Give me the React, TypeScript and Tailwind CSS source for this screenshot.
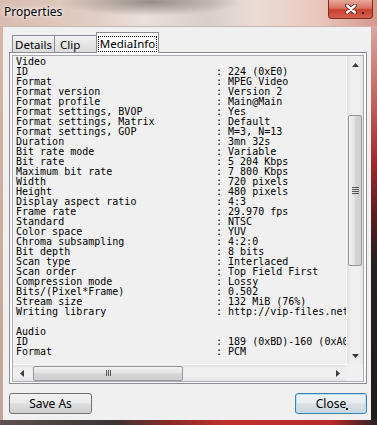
import React from "react";

const ROWS: [string, string | null][] = [
  ["Video", null],
  ["ID", "224 (0xE0)"],
  ["Format", "MPEG Video"],
  ["Format version", "Version 2"],
  ["Format profile", "Main@Main"],
  ["Format settings, BVOP", "Yes"],
  ["Format settings, Matrix", "Default"],
  ["Format settings, GOP", "M=3, N=13"],
  ["Duration", "3mn 32s"],
  ["Bit rate mode", "Variable"],
  ["Bit rate", "5 204 Kbps"],
  ["Maximum bit rate", "7 800 Kbps"],
  ["Width", "720 pixels"],
  ["Height", "480 pixels"],
  ["Display aspect ratio", "4:3"],
  ["Frame rate", "29.970 fps"],
  ["Standard", "NTSC"],
  ["Color space", "YUV"],
  ["Chroma subsampling", "4:2:0"],
  ["Bit depth", "8 bits"],
  ["Scan type", "Interlaced"],
  ["Scan order", "Top Field First"],
  ["Compression mode", "Lossy"],
  ["Bits/(Pixel*Frame)", "0.502"],
  ["Stream size", "132 MiB (76%)"],
  ["Writing library", "http://vip-files.net/"],
  ["", null],
  ["Audio", null],
  ["ID", "189 (0xBD)-160 (0xA0)"],
  ["Format", "PCM"],
];

function Arrow({ dir }: { dir: "up" | "down" | "left" | "right" }) {
  const pts = {
    up: "0,4 3.5,0 7,4",
    down: "0,0 7,0 3.5,4",
    left: "4,0 4,7 0,3.5",
    right: "0,0 4,3.5 0,7",
  }[dir];
  const vertical = dir === "up" || dir === "down";
  return (
    <svg width={vertical ? 7 : 4} height={vertical ? 4 : 7} viewBox={vertical ? "0 0 7 4" : "0 0 4 7"}>
      <polygon points={pts} fill="#3a3a3a" />
    </svg>
  );
}

function VScroll() {
  return (
    <div className="flex flex-col bg-[linear-gradient(90deg,#e2e2e2,#efefef_25%,#efefef_75%,#e4e4e4)] border-l border-[#f7f7f7]">
      <div className="h-[17px] flex items-center justify-center">
        <Arrow dir="up" />
      </div>
      <div className="flex-1">
        <div className="mt-[42px] mx-[1px] h-[151px] rounded-[2px] border border-[#979797] bg-[linear-gradient(90deg,#f4f4f4,#e2e2e2_45%,#d4d4d4_55%,#cfcfcf)] flex flex-col items-center justify-center gap-[1px]">
          <div className="w-[7px] h-px bg-[#555]" />
          <div className="w-[7px] h-px bg-[#555]" />
          <div className="w-[7px] h-px bg-[#555]" />
          <div className="w-[7px] h-px bg-[#555]" />
        </div>
      </div>
      <div className="h-[17px] flex items-center justify-center">
        <Arrow dir="down" />
      </div>
    </div>
  );
}

function HScroll() {
  return (
    <div className="flex bg-[linear-gradient(180deg,#e2e2e2,#efefef_25%,#efefef_75%,#e4e4e4)] border-t border-[#f7f7f7]">
      <div className="w-[17px] flex items-center justify-center">
        <Arrow dir="left" />
      </div>
      <div className="flex-1 flex items-center">
        <div className="ml-[3px] w-[150px] h-[15px] rounded-[2px] border border-[#979797] bg-[linear-gradient(180deg,#f4f4f4,#e2e2e2_45%,#d4d4d4_55%,#cfcfcf)] flex items-center justify-center gap-[1px]">
          <div className="w-px h-[6px] bg-[#555]" />
          <div className="w-px h-[6px] bg-[#555]" />
          <div className="w-px h-[6px] bg-[#555]" />
        </div>
      </div>
      <div className="w-[17px] flex items-center justify-center">
        <Arrow dir="right" />
      </div>
    </div>
  );
}

function InfoBox() {
  return (
    <div className="w-[352px] h-[327px] border border-[#abadb3] bg-[#f0f0f0] grid grid-cols-[333px_17px] grid-rows-[308px_17px]">
      <div className="overflow-hidden pl-[3px] pt-[1px] font-['DejaVu_Sans_Mono',monospace] text-[10px] leading-[10px] text-black">
        {ROWS.map(([label, value], i) => (
          <div key={i} className="flex h-[10px] whitespace-pre">
            <span className="w-[200px] shrink-0">{label}</span>
            {value !== null && <span>: {value}</span>}
          </div>
        ))}
      </div>
      <VScroll />
      <HScroll />
      <div className="bg-[#f0f0f0]" />
    </div>
  );
}

export default function App() {
  return (
    <div className="w-[377px] h-[425px] overflow-hidden flex flex-col font-['Segoe_UI','Noto_Sans',sans-serif]">
      {/* title bar over the blurred desktop */}
      <div className="h-[26px] shrink-0 flex items-start justify-between bg-[radial-gradient(ellipse_90px_14px_at_150px_2px,rgba(120,112,106,0.75),transparent),linear-gradient(90deg,#d9bcb0,#e2cdc4_25%,#e9e0db_38%,#d6cfcb_55%,#ecdcd5_68%,#e9c6bc_85%,#d7978b)]">
        <span className="ml-[4px] mt-[5px] text-[12px] leading-[14px] text-black [text-shadow:0_0_6px_#fff,0_0_3px_#fff]">
          Properties
        </span>
        <div className="relative mr-[4px] w-[45px] h-[19px] rounded-b-[4px] border border-t-0 border-[#7c2a22] bg-[linear-gradient(180deg,#e9a99c,#d8705f_45%,#c7412e_55%,#d5614e)] flex items-center justify-center">
          <svg width="12" height="10" viewBox="0 0 12 10">
            <path d="M2 1.5 L10 8.5 M10 1.5 L2 8.5" stroke="#5a2018" strokeWidth="4" strokeLinecap="round" />
            <path d="M2 1.5 L10 8.5 M10 1.5 L2 8.5" stroke="#ffffff" strokeWidth="2.4" strokeLinecap="round" />
          </svg>
          <span className="absolute right-[8px] top-[12px] w-[2px] h-[2px] bg-[#2a1a18]" />
        </div>
      </div>

      <div className="flex h-[394px] shrink-0">
        <div className="w-[3px] bg-[linear-gradient(180deg,#d8b4a8,#d0aca0_50%,#c2a49a)]" />
        <div className="w-[368px] bg-[#f0f0f0] flex flex-col border-t border-[#c9b4ac]">
          {/* tabs */}
          <div className="mt-[5px] ml-[9px] h-[20px] flex items-end text-[11.5px] text-black">
            <div className="w-[43px] h-[17px] border border-b-0 border-[#898c95] bg-[linear-gradient(180deg,#f3f3f3,#e6e6e6_50%,#dcdcdc)] flex items-center justify-center pt-px">
              Details
            </div>
            <div className="w-[42px] h-[17px] border border-l-0 border-b-0 border-[#898c95] bg-[linear-gradient(180deg,#f3f3f3,#e6e6e6_50%,#dcdcdc)] flex items-center pl-[5px] pt-px">
              Clip
            </div>
            <div className="relative z-10 -ml-px -mb-px w-[63px] h-[21px] border border-b-0 border-[#898c95] bg-[#fcfcfc] flex items-start justify-center pt-[3px]">
              <span className="w-[59px] h-[16px] border border-dotted border-black flex items-center justify-center leading-[14px]">
                MediaInfo
              </span>
            </div>
          </div>

          {/* tab page */}
          <div className="ml-[6px] w-[358px] h-[332px] border border-[#898c95] bg-[#fcfcfc] pt-[2px] pl-[2px]">
            <InfoBox />
          </div>

          {/* buttons */}
          <div className="mt-[9px] ml-[6px] mr-[4px] flex justify-between text-[12px] text-black">
            <div className="w-[83px] h-[21px] rounded-[3px] border border-[#707070] bg-[linear-gradient(180deg,#f2f2f2,#ebebeb_48%,#dddddd_52%,#cfcfcf)] flex items-center justify-center">
              Save As
            </div>
            <div className="relative w-[72px] h-[21px] rounded-[3px] border border-[#3c7fb1] shadow-[inset_0_0_0_1px_#b8e3f7] bg-[linear-gradient(180deg,#f0f4f6,#e6ecef_48%,#d8e0e4_52%,#cdd6db)] flex items-center justify-center">
              Close
              <span className="absolute left-[50px] top-[14px] w-[2px] h-[2px] bg-[#222]" />
            </div>
          </div>
        </div>
        <div className="w-[6px] bg-[linear-gradient(180deg,#d9a79e,#c0605a_20%,#a3272a_35%,#5a1d1f_48%,#262021_60%,#1f1c1c)]" />
      </div>

      <div className="h-[5px] shrink-0 bg-[linear-gradient(90deg,#5e5050,#3a3434_30%,#8a2a28_45%,#c2302c_60%,#b8282a_88%,#2a2222)]" />
    </div>
  );
}
